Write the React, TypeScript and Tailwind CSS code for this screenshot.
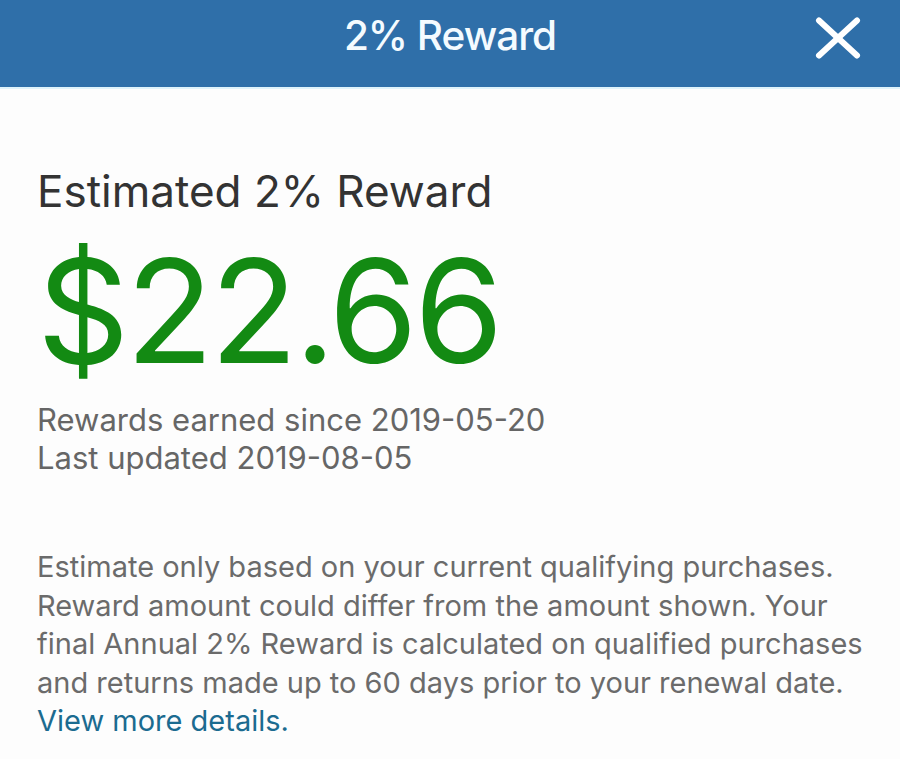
const App = () => {
  return (
    <div className="min-h-[759px] w-[900px] bg-[#fdfdfd] font-['Inter',sans-serif]">
      {/* header */}
      <div className="relative flex h-[89px] items-center justify-center bg-[#2f6fa9] border-b-2 border-[#dff3fb] pb-[14px]">
        <h1 className="text-[40.5px] font-medium tracking-tight text-[#f4fbff]">2% Reward</h1>
        <button className="absolute right-[39px] top-[17px] text-white">
          <svg width="46" height="42" viewBox="0 0 46 42" fill="none" stroke="currentColor" strokeWidth="6" strokeLinecap="round">
            <path d="M4 3.5 L42 38.5" />
            <path d="M42 3.5 L4 38.5" />
          </svg>
        </button>
      </div>

      <div className="px-[37px] pt-[78px]">
        <h2 className="text-[44px] leading-[48px] text-[#333333]">Estimated 2% Reward</h2>
        <p className="mt-[24px] text-[144px] leading-[144px] tracking-tight text-[#138a13]">$22.66</p>

        <div className="mt-[18px] text-[31px] leading-[38px] text-[#666666]">
          <p>Rewards earned since 2019-05-20</p>
          <p>Last updated 2019-08-05</p>
        </div>

        <p className="mt-[71px] text-[29px] leading-[38.5px] text-[#6b6b6b]">
          Estimate only based on your current qualifying purchases.
          <br />
          Reward amount could differ from the amount shown. Your
          <br />
          final Annual 2% Reward is calculated on qualified purchases
          <br />
          and returns made up to 60 days prior to your renewal date.
          <br />
          <a href="#" className="text-[#1b6b90]">View more details.</a>
        </p>
      </div>
    </div>
  );
};

export default App;
